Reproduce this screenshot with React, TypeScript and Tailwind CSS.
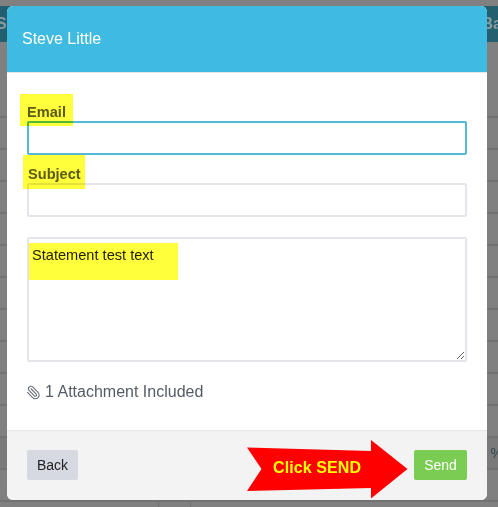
import { Paperclip } from 'lucide-react';

const sans = "font-['Liberation_Sans',Arial,sans-serif]";

// Dimmed page behind the dialog
function BackgroundPage() {
  return (
    <div className="h-[507px] bg-[#808080] flex flex-col overflow-hidden">
      <div className="h-1.5 shrink-0" />
      <div className="h-9 shrink-0 bg-[#22606f] flex items-center justify-between text-[16px] font-bold text-[#8a9aa0]">
        <span className="-ml-[4px]">S</span>
        <span className="-mr-[4px]">Ba</span>
      </div>
      <div className="h-[76px] shrink-0 border-b-2 border-[#727272]" />
      {Array.from({ length: 12 }).map((_, i) => (
        <div
          key={i}
          className={`h-8 shrink-0 border-b-2 border-[#727272] flex items-center justify-end ${i === 10 ? 'bg-[#7a7a7a]' : ''}`}
        >
          {i === 10 && <span className="text-[14px] text-[#2f4650] mr-[-5px]">%</span>}
        </div>
      ))}
      <div className="flex h-2 shrink-0">
        <div className="w-[159px] border-r border-[#727272]" />
        <div className="w-8 border-r border-[#727272]" />
      </div>
    </div>
  );
}

// Yellow marker rectangles painted on the screenshot
function Highlight({ className }: { className: string }) {
  return <div className={`absolute bg-[#ffff3c] mix-blend-multiply ${className}`} />;
}

function SendArrow() {
  return (
    <div className="relative w-[161px] h-[60px] flex items-center">
      <svg className="absolute inset-0" width="161" height="60" viewBox="0 0 161 60">
        <polygon points="0,7.5 124,11 124,0 160.5,29 124,58.5 124,48 0,51 14.5,29" fill="#ff0000" />
      </svg>
      <span className="relative pl-[26px] text-[16px] leading-5 font-bold text-[#ffff00] mt-[-5px] tracking-[0.1px]">Click SEND</span>
    </div>
  );
}

export default function App() {
  return (
    <div className={`relative w-[498px] h-[507px] overflow-hidden ${sans}`}>
      <BackgroundPage />

      {/* Dialog */}
      <div className="absolute left-[7px] top-[6px] w-[480px] h-[494px] rounded-md overflow-hidden bg-white flex flex-col">
        <div className="h-[67px] shrink-0 bg-[#3fbbe1] border-b border-[#e5e5e5] flex items-center px-[15px] pb-px">
          <h1 className="text-[16px] text-white">Steve Little</h1>
        </div>

        <div className="flex-1 px-5 pt-[32px] flex flex-col">
          <label className="text-[14.6px] leading-4 font-bold text-[#5c5c5c] mb-[1px] mt-[-1px]">Email</label>
          <input className="h-[34px] shrink-0 w-full rounded-[2px] border-2 border-[#53b9d6] outline-none" />
          <label className="text-[14.6px] leading-4 font-bold text-[#5c5c5c] mt-[11px] mb-[1px] ml-px">Subject</label>
          <input className="h-[34px] shrink-0 w-full rounded-[2px] border-2 border-[#e4e4ea] outline-none" />
          <textarea
            className="mt-5 h-[125px] shrink-0 w-full rounded-[2px] border-2 border-[#e4e4ea] px-[3px] py-[8px] text-[14.6px] leading-4 text-[#222] outline-none"
            defaultValue="Statement test text"
          />
          <div className="mt-5 flex items-center text-[16px] leading-5 text-[#555b66]">
            <Paperclip size={15} strokeWidth={1.75} className="mr-[4px] -ml-px -scale-x-100 text-[#6b6f78]" />
            <span>1 Attachment Included</span>
          </div>
        </div>

        <div className="h-[70px] shrink-0 bg-[#f3f3f3] border-t border-[#e6e6e6] flex items-start justify-between pl-5 pr-5 pt-[19px]">
          <button className="w-[51px] h-[30px] rounded-[2px] bg-[#d6d9e2] text-[14px] text-[#222]">Back</button>
          <button className="w-[53px] h-[30px] rounded-[2px] bg-[#7acc52] text-[14px] text-white">Send</button>
        </div>
      </div>

      <Highlight className="left-[20px] top-[94px] w-[53px] h-[32px]" />
      <Highlight className="left-[23px] top-[155px] w-[62px] h-[34px]" />
      <Highlight className="left-[29px] top-[243px] w-[149px] h-[37px]" />

      <div className="absolute left-[247px] top-[440px]">
        <SendArrow />
      </div>
    </div>
  );
}
